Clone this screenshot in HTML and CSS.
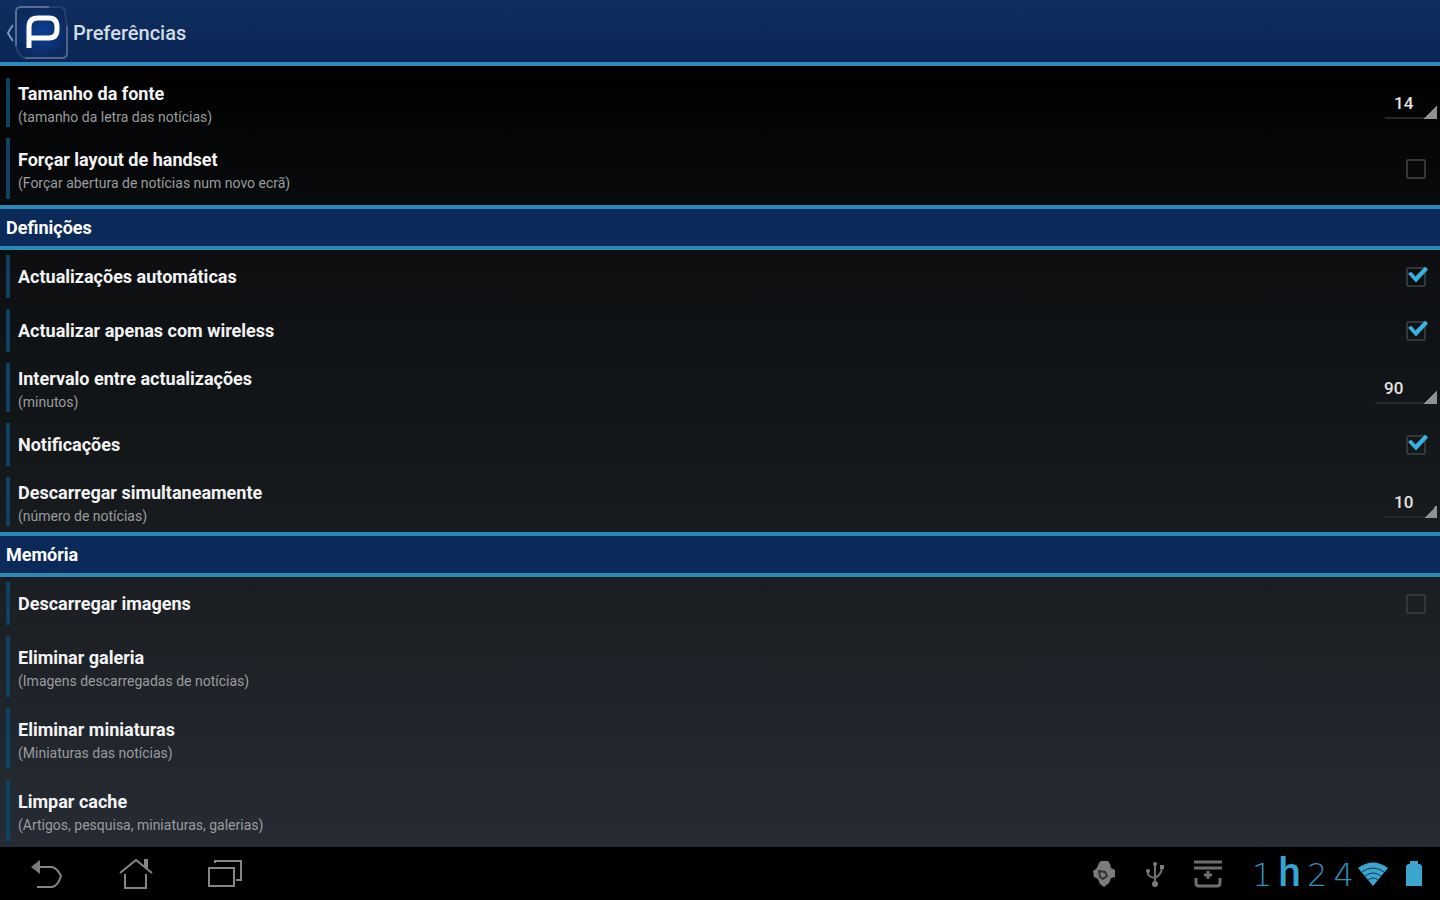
FILE: index.html
```html
<!DOCTYPE html>
<html lang="pt">
<head>
<meta charset="utf-8">
<title>Preferências</title>
<link rel="stylesheet" href="styles.css">
</head>
<body>
<header class="app-bar">
  <button class="up" type="button" aria-label="Voltar">
    <svg class="chevron" width="8" height="18" viewBox="0 0 8 18"><path d="M7 1Q4 5 2 9Q4 13 7 17"/></svg>
    <svg width="54" height="54" viewBox="0 0 54 54">
      <defs><radialGradient id="logo-fill"><stop offset="0" stop-color="#0b3f97"/><stop offset="1" stop-color="#0b2a5c"/></radialGradient></defs>
      <path d="M6 1H45Q50 1 50 6L53 48Q53 52 48 53H10L1 44V6Q1 1 6 1Z" fill="url(#logo-fill)"/>
      <path d="M1 40V6Q1 1 6 1H34" fill="none" stroke="#5a6d95" stroke-width="2"/>
      <path d="M34 1H45Q50 1 50 7L52 20M1 40Q3 50 10 52" fill="none" stroke="#233f73" stroke-width="2"/>
      <path d="M52 20V47Q52 52 47 52H10" fill="none" stroke="#52648c" stroke-width="2"/>
      <path d="M14 42V21Q14 12 23 12H34Q42 12 42 21V23Q42 32 34 32H15" fill="none" stroke="#fff" stroke-width="5"/>
    </svg>
  </button>
  <h1 class="app-title">Preferências</h1>
</header>
<main class="prefs">
  <section class="group group-first">
    <div class="row row-spinner">
      <label class="text" for="font-size"><span class="title">Tamanho da fonte</span><span class="hint">(tamanho da letra das notícias)</span></label>
      <select class="spinner" id="font-size"><option>14</option></select>
    </div>
    <div class="row row-tall">
      <label class="text" for="handset"><span class="title">Forçar layout de handset</span><span class="hint">(Forçar abertura de notícias num novo ecrã)</span></label>
      <input class="check" type="checkbox" id="handset">
    </div>
  </section>
  <h2 class="heading">Definições</h2>
  <section class="group">
    <div class="row">
      <label class="title" for="auto">Actualizações automáticas</label>
      <input class="check" type="checkbox" id="auto" checked>
    </div>
    <div class="row">
      <label class="title" for="wifi">Actualizar apenas com wireless</label>
      <input class="check" type="checkbox" id="wifi" checked>
    </div>
    <div class="row row-spinner">
      <label class="text" for="interval"><span class="title">Intervalo entre actualizações</span><span class="hint">(minutos)</span></label>
      <select class="spinner spinner-wide" id="interval"><option>90</option></select>
    </div>
    <div class="row">
      <label class="title" for="notify">Notificações</label>
      <input class="check" type="checkbox" id="notify" checked>
    </div>
    <div class="row row-spinner">
      <label class="text" for="batch"><span class="title">Descarregar simultaneamente</span><span class="hint">(número de notícias)</span></label>
      <select class="spinner" id="batch"><option>10</option></select>
    </div>
  </section>
  <h2 class="heading">Memória</h2>
  <section class="group">
    <div class="row">
      <label class="title" for="images">Descarregar imagens</label>
      <input class="check" type="checkbox" id="images">
    </div>
    <button class="row row-tall" type="button"><span class="text"><span class="title">Eliminar galeria</span><span class="hint">(Imagens descarregadas de notícias)</span></span></button>
    <button class="row row-tall" type="button"><span class="text"><span class="title">Eliminar miniaturas</span><span class="hint">(Miniaturas das notícias)</span></span></button>
    <button class="row row-tall" type="button"><span class="text"><span class="title">Limpar cache</span><span class="hint">(Artigos, pesquisa, miniaturas, galerias)</span></span></button>
  </section>
</main>
<footer class="system-bar">
  <nav class="nav">
    <button type="button" aria-label="Recuar"><svg width="34" height="32" viewBox="0 0 34 32"><path class="solid" d="M1 9L10 2V16Z"/><path d="M9 9H22Q27 10 31 18Q28 28 22 29H7"/></svg></button>
    <button type="button" aria-label="Início"><svg width="34" height="32" viewBox="0 0 34 32"><path d="M1 15L17 2L33 15M26 9V2H28V11M6 16V30H27V16"/></svg></button>
    <button type="button" aria-label="Recentes"><svg width="34" height="32" viewBox="0 0 34 32"><path d="M1 10H26V28H1ZM7 5V3H33V22H28"/></svg></button>
  </nav>
  <div class="status">
    <svg width="24" height="28" viewBox="0 0 24 28"><path class="solid" d="M7 3L9 1H16L18 4L19 8L23 10V17L19 18L17 23L12 27L8 24L6 19L2 17L1 11L5 8Z"/><path class="cut" d="M7 11L13 12L15 16L11 19L8 17Z"/></svg>
    <svg width="18" height="28" viewBox="0 0 18 28"><path class="thin" d="M9 4V23M2 11V14Q3 17 9 18Q15 15 16 8"/><circle class="solid" cx="9" cy="4" r="2"/><circle class="solid" cx="9" cy="24" r="3"/><circle class="solid" cx="2" cy="11" r="2"/><path class="solid" d="M14 5H18V9H14Z"/></svg>
    <svg width="28" height="28" viewBox="0 0 28 28"><path d="M0 2H28M0 8H28M2 18V23Q2 26 5 26H23Q26 26 26 23V18M14 11V19M10 15H18"/></svg>
    <div class="tray">
      <time class="clock" datetime="01:24"><span>1</span><b>h</b><span>2</span><span>4</span></time>
      <svg width="30" height="24" viewBox="0 0 30 24"><path class="lit" d="M0 6Q15-5 30 6L15 24Z"/><path class="gap" d="M4 10Q15 2 26 10M7 14Q15 8 23 14M10 18Q15 14 20 18"/></svg>
      <svg class="battery" width="16" height="25" viewBox="0 0 16 25"><path class="lit" d="M4 3V0H12V3H14L16 5V25H0V5L2 3Z"/></svg>
    </div>
  </div>
</footer>
</body>
</html>
```
FILE: styles.css
```css
* { box-sizing: border-box; }
body {
  margin: 0;
  min-height: 100vh;
  display: flex;
  flex-direction: column;
  background: #000;
  color: #f4f4f4;
  font-family: Roboto, "Liberation Sans", sans-serif;
}
button {
  border: 0;
  padding: 0;
  background: none;
  color: inherit;
  font: inherit;
  text-align: left;
}
svg { display: block; flex: none; }

.app-bar {
  display: flex;
  align-items: center;
  gap: 4px;
  height: 66px;
  padding: 3px 0 0 6px;
  border-bottom: 4px solid #2c8bb8;
  background: linear-gradient(#0e2f60, #0a2654);
}
.up { display: flex; align-items: center; gap: 1px; }
.chevron { fill: none; stroke: #7d93b8; stroke-width: 2; }
.app-title { margin: 0; font-size: 20px; font-weight: 500; color: #d5dbe6; }

.prefs { flex: 1; background: linear-gradient(#000, #0d0f11 25%, #171b1e 58%, #272c34); }
.group { display: flex; flex-direction: column; gap: 11px; padding: 5px 3px 6px 6px; }
.group-first { padding-top: 12px; }
.heading {
  margin: 0;
  height: 45px;
  padding-left: 6px;
  border: solid #2b8ab5;
  border-width: 4px 0;
  background: #0c2a59;
  font-size: 18px;
  line-height: 38px;
  color: #fff;
}
.row {
  display: flex;
  align-items: center;
  justify-content: space-between;
  min-height: 43px;
  padding-left: 8px;
  border-left: 4px solid #0d4263;
}
.row-spinner { min-height: 49px; }
.row-tall { min-height: 61px; }
.text { display: flex; flex-direction: column; padding-top: 3px; }
.title { font-size: 18px; font-weight: 700; line-height: 26px; }
.hint { font-size: 14px; line-height: 20px; color: #9a9c9e; }

.check {
  appearance: none;
  width: 20px;
  height: 20px;
  margin: 0 11px 0 0;
  border: 2px solid #34373a;
  border-radius: 2px;
  position: relative;
}
.check:checked::after {
  content: "";
  position: absolute;
  left: 0;
  top: -2px;
  width: 20px;
  height: 16px;
  background: #36b3e2;
  clip-path: polygon(0 45%, 16% 33%, 37% 62%, 86% 0, 100% 18%, 40% 100%);
}
.spinner {
  appearance: none;
  width: 52px;
  height: 33px;
  border: 0;
  padding: 0 0 0 9px;
  background:
    linear-gradient(135deg, transparent 50%, #8f9193 50%) right bottom / 13px 13px no-repeat,
    linear-gradient(#25282a, #25282a) left bottom / 40px 2px no-repeat;
  color: #e4e4e4;
  font: 500 17px Roboto, "Liberation Sans", sans-serif;
}
.spinner-wide { width: 62px; background-size: 13px 13px, 50px 2px; }

.system-bar {
  display: flex;
  align-items: center;
  justify-content: space-between;
  height: 53px;
  padding: 0 18px 0 30px;
  background: #000;
}
.system-bar svg { fill: none; stroke: #858585; stroke-width: 2; }
.nav { display: flex; gap: 55px; }
.status { display: flex; align-items: center; gap: 30px; }
.status > svg { stroke: #6e6e6e; stroke-width: 3; }
.system-bar .solid { fill: #7c7c7c; stroke: none; }
.system-bar .cut { stroke: #333; stroke-width: 2; }
.system-bar .thin { stroke-width: 2; }
.system-bar .lit { fill: #3ba4cf; stroke: none; }
.system-bar .gap { stroke: #10394c; stroke-width: 1; }
.tray { display: flex; align-items: center; }
.clock {
  display: flex;
  align-items: baseline;
  justify-content: space-between;
  width: 106px;
  padding-right: 4px;
  color: #3191ba;
  font: 200 32px/46px "DejaVu Sans", sans-serif;
}
.clock b { font: 500 40px/46px Roboto, sans-serif; color: #35a4d4; }
.battery { margin-left: 18px; }
```
